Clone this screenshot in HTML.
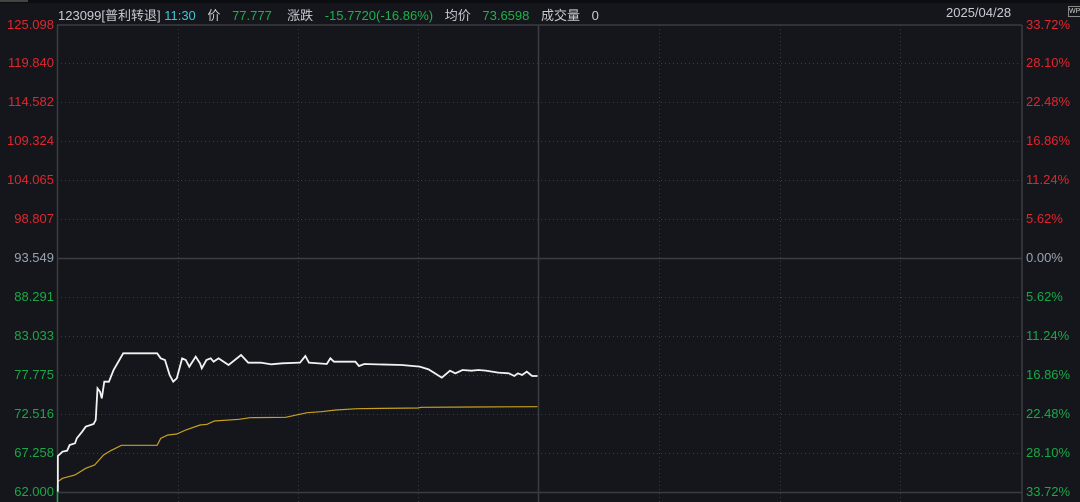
<!DOCTYPE html>
<html><head><meta charset="utf-8"><style>
body{margin:0;background:#14161b;width:1080px;height:502px;overflow:hidden;position:relative;font-family:"Liberation Sans","Noto Sans CJK SC",sans-serif;}
.hdr{position:absolute;top:5px;left:58px;font-size:13px;color:#c8ccd2;white-space:nowrap;}
.hdr span{margin-right:8px}
.c{color:#3fc6d6}.g{color:#1fb04a}
.lab{position:absolute;font-size:13px;line-height:14px}
.l{right:1026px;text-align:right}
.r{left:1026px}
.red{color:#e0262e}.grn{color:#1aa846}.gry{color:#9aa4b0}
</style></head><body>
<div style="position:absolute;left:0;top:0;width:1080px;height:3px;background:#0c0d10"></div>
<div style="position:absolute;left:0;top:0;width:28px;height:2px;background:#444"></div>
<div class="hdr">123099[普利转退] <span class="c">11:30</span> <span>价</span> <span class="g">77.777</span> &nbsp;<span>涨跌</span> <span class="g">-15.7720(-16.86%)</span> <span>均价</span> <span class="g">73.6598</span> <span>成交量</span> 0</div>
<div class="hdr" style="left:946px">2025/04/28</div>
<div style="position:absolute;left:1068px;top:6px;width:12px;height:9px;border:1px solid #888;font-size:7px;color:#ccc;line-height:9px">WP</div>
<svg width="1080" height="502" style="position:absolute;left:0;top:0">
<g stroke="#3a3d44" stroke-dasharray="1,3" stroke-width="1">
<line x1="57" x2="1022" y1="63.5" y2="63.5"/><line x1="57" x2="1022" y1="102.5" y2="102.5"/><line x1="57" x2="1022" y1="141.5" y2="141.5"/><line x1="57" x2="1022" y1="180.5" y2="180.5"/><line x1="57" x2="1022" y1="219.5" y2="219.5"/><line x1="57" x2="1022" y1="297.5" y2="297.5"/><line x1="57" x2="1022" y1="336.5" y2="336.5"/><line x1="57" x2="1022" y1="375.5" y2="375.5"/><line x1="57" x2="1022" y1="414.5" y2="414.5"/><line x1="57" x2="1022" y1="453.5" y2="453.5"/>
<line x1="178.5" x2="178.5" y1="25" y2="502"/><line x1="298.5" x2="298.5" y1="25" y2="502"/><line x1="418.5" x2="418.5" y1="25" y2="502"/><line x1="659.5" x2="659.5" y1="25" y2="502"/><line x1="780.5" x2="780.5" y1="25" y2="502"/><line x1="900.5" x2="900.5" y1="25" y2="502"/>
</g>
<g stroke="#3a3c42" stroke-width="1.5" fill="none">
<line x1="57" x2="1022" y1="25" y2="25"/><line x1="57" x2="1022" y1="258.5" y2="258.5"/><line x1="57" x2="1022" y1="492.5" y2="492.5"/>
<line x1="57.5" x2="57.5" y1="25" y2="502"/><line x1="538.5" x2="538.5" y1="25" y2="502"/><line x1="1022" x2="1022" y1="25" y2="502"/>
</g>
<line x1="57.5" x2="57.5" y1="485" y2="502" stroke="#1aa846" stroke-width="1.5"/>
<g transform="translate(0,330) scale(0.35714,0.33333)" fill="none">
<polyline vector-effect="non-scaling-stroke" stroke="#c8a020" stroke-width="1.2" points="162,455 175,445 210,435 240,415 265,405 290,375 310,362 340,346 440,346 450,325 470,315 495,312 520,300 560,285 580,283 600,273 670,268 700,263 800,262 860,248 900,245 940,240 1000,236 1170,234 1180,232 1320,231 1505,230"/>
<polyline vector-effect="non-scaling-stroke" stroke="#f2f2f2" stroke-width="1.8" points="162,485 162,378 175,365 188,362 195,345 210,340 215,325 230,305 240,290 262,282 268,270 273,175 280,185 285,205 292,155 305,155 318,120 345,70 440,70 450,85 462,90 475,135 485,155 495,145 510,85 520,90 530,110 548,80 560,100 565,115 578,90 590,85 598,95 612,85 640,105 675,75 695,98 730,98 760,103 790,100 840,98 855,78 865,98 915,102 925,85 935,95 995,95 1005,108 1020,102 1125,105 1175,110 1200,118 1237,143 1260,122 1275,130 1295,120 1320,122 1340,120 1360,122 1395,128 1425,130 1440,138 1450,130 1462,135 1475,125 1490,138 1505,138"/>
</g>
</svg>
<div class="lab l red" style="top:18px">125.098</div>
<div class="lab l red" style="top:56px">119.840</div>
<div class="lab l red" style="top:95px">114.582</div>
<div class="lab l red" style="top:134px">109.324</div>
<div class="lab l red" style="top:173px">104.065</div>
<div class="lab l red" style="top:212px">98.807</div>
<div class="lab l gry" style="top:251px">93.549</div>
<div class="lab l grn" style="top:290px">88.291</div>
<div class="lab l grn" style="top:329px">83.033</div>
<div class="lab l grn" style="top:368px">77.775</div>
<div class="lab l grn" style="top:407px">72.516</div>
<div class="lab l grn" style="top:446px">67.258</div>
<div class="lab l grn" style="top:485px">62.000</div>
<div class="lab r red" style="top:18px">33.72%</div>
<div class="lab r red" style="top:56px">28.10%</div>
<div class="lab r red" style="top:95px">22.48%</div>
<div class="lab r red" style="top:134px">16.86%</div>
<div class="lab r red" style="top:173px">11.24%</div>
<div class="lab r red" style="top:212px">5.62%</div>
<div class="lab r gry" style="top:251px">0.00%</div>
<div class="lab r grn" style="top:290px">5.62%</div>
<div class="lab r grn" style="top:329px">11.24%</div>
<div class="lab r grn" style="top:368px">16.86%</div>
<div class="lab r grn" style="top:407px">22.48%</div>
<div class="lab r grn" style="top:446px">28.10%</div>
<div class="lab r grn" style="top:485px">33.72%</div>
</body></html>
